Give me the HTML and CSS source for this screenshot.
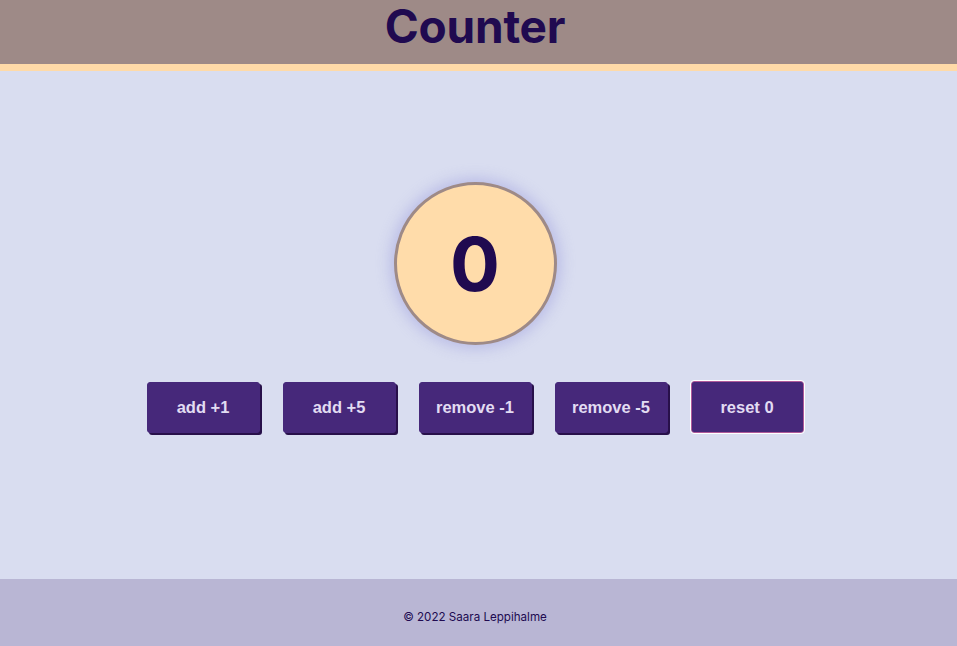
FILE: index.html
```html
<!DOCTYPE html>
<html lang="en">
<head>
<meta charset="utf-8">
<title>Counter</title>
<link rel="stylesheet" href="styles.css">
</head>
<body>
<header class="header">
  <h1 class="title">Counter</h1>
</header>
<main class="main">
  <div class="counter"><span class="count">0</span></div>
  <div class="buttons">
    <button class="btn">add +1</button>
    <button class="btn">add +5</button>
    <button class="btn">remove -1</button>
    <button class="btn">remove -5</button>
    <button class="btn btn-focus">reset 0</button>
  </div>
</main>
<footer class="footer">
  <p class="copy">© 2022 Saara Leppihalme</p>
</footer>
</body>
</html>
```
FILE: styles.css
```css
* { box-sizing: border-box; }
html, body { margin: 0; padding: 0; }
body {
  font-family: Inter, "Noto Sans", sans-serif;
  background: #d9ddf0;
  height: 646px;
  display: flex;
  flex-direction: column;
}
.header {
  height: 71px;
  background: #9e8a87;
  border-bottom: 7px solid #ffdaa8;
  display: flex;
  justify-content: center;
  padding-right: 7px;
}
.title {
  margin: 0;
  font-size: 46px;
  font-weight: 700;
  color: #200a50;
  line-height: 52px;
  letter-spacing: -0.2px;
}
.main {
  flex: 1;
  display: flex;
  flex-direction: column;
  align-items: center;
  padding-top: 111px;
  padding-right: 7px;
}
.counter {
  width: 163px;
  height: 163px;
  border-radius: 50%;
  background: #ffdcaa;
  border: 3px solid #9e8a87;
  box-shadow: 0 0 14px 4px rgba(150, 150, 220, 0.45);
  display: flex;
  align-items: center;
  justify-content: center;
}
.count {
  font-size: 74px;
  font-weight: 700;
  color: #200a50;
  line-height: 1;
}
.buttons {
  margin-top: 37px;
  display: flex;
  gap: 23px;
}
.btn {
  width: 113px;
  height: 51px;
  background: #46287a;
  color: #e2dcf2;
  border: 1px solid #46287a;
  border-radius: 3px;
  box-shadow: 2px 2px 0 #28104a;
  font-family: "Liberation Sans", Arial, sans-serif;
  font-weight: 700;
  font-size: 16.5px;
  padding: 0;
}
.btn-focus {
  border: 1px solid #b05a9a;
  outline: 1px solid #ffffff;
  box-shadow: none;
  height: 52px;
  margin-top: -1px;
}
.footer {
  height: 67px;
  background: #b9b6d4;
  display: flex;
  align-items: center;
  justify-content: center;
  padding-right: 7px;
}
.copy {
  margin: 8px 0 0;
  font-size: 11.6px;
  color: #200a50;
}
```
